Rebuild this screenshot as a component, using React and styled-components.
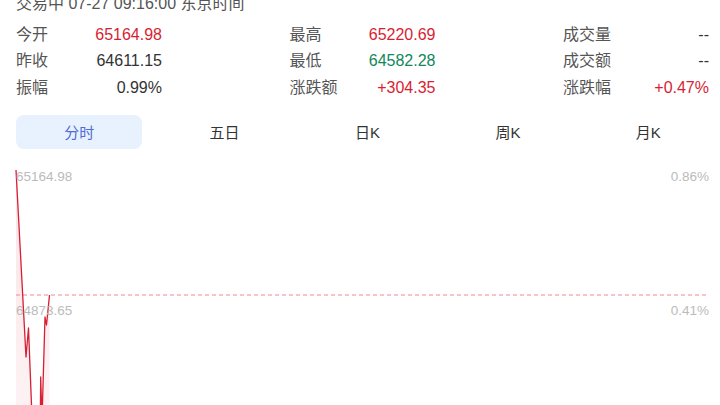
import React from "react";
import styled, { createGlobalStyle } from "styled-components";

const Global = createGlobalStyle`
  html, body { margin: 0; padding: 0; background: #fff; overflow: hidden; }
  body { font-family: "Liberation Sans", Arial, "Noto Sans CJK SC", sans-serif; }
`;

const RED = "#d81e33";
const GREEN = "#12875b";

const Page = styled.div`
  width: 720px;
  height: 405px;
  box-sizing: border-box;
  padding: 0 11px 0 16px;
  overflow: hidden;
`;

const Status = styled.div`
  margin-top: -9.5px;
  font-size: 16px;
  line-height: 26px;
  color: #555;
  white-space: nowrap;
`;

const Stats = styled.div`
  margin-top: 5.5px;
  display: grid;
  grid-template-columns: repeat(3, 146px);
  justify-content: space-between;
  font-size: 16px;
  line-height: 26.3px;
`;

const Cell = styled.div`
  display: flex;
  justify-content: space-between;
`;

const Label = styled.span`
  color: #555;
`;

const Value = styled.span`
  color: ${(p) => (p.$tone === "up" ? RED : p.$tone === "down" ? GREEN : "#333")};
`;

const Tabs = styled.div`
  margin-top: 14px;
  display: flex;
  gap: 19px;
`;

const Tab = styled.div`
  flex: 1 1 auto;
  height: 34px;
  display: flex;
  align-items: center;
  justify-content: center;
  border-radius: 8px;
  font-size: 15px;
  background: ${(p) => (p.$active ? "#e7f2fe" : "transparent")};
  color: ${(p) => (p.$active ? "#4f6bd5" : "#333")};
`;

const Chart = styled.div`
  position: relative;
  margin-top: 11px;
  height: 270px;
`;

const ChartSvg = styled.svg`
  position: absolute;
  inset: 0;
  overflow: visible;
`;

const AxisLabel = styled.span`
  position: absolute;
  top: ${(p) => p.$top}px;
  ${(p) => (p.$right ? "right: 0;" : "left: 0;")}
  font-size: 13.5px;
  line-height: 16px;
  color: #bbb;
`;

const stats = [
  ["今开", "65164.98", "up"],
  ["最高", "65220.69", "up"],
  ["成交量", "--"],
  ["昨收", "64611.15"],
  ["最低", "64582.28", "down"],
  ["成交额", "--"],
  ["振幅", "0.99%"],
  ["涨跌额", "+304.35", "up"],
  ["涨跌幅", "+0.47%", "up"],
];

const tabs = ["分时", "五日", "日K", "周K", "月K"];

const pts = [
  [0, 10], [10, 197], [12.5, 168], [15.5, 245], [17, 300], [24, 290],
  [24.7, 217], [26, 260], [29, 157], [30.5, 165], [33.5, 135],
];

export default function App() {
  const line = pts.map((p) => p.join(",")).join(" ");
  const area = `0,300 ${line} 33.5,300`;
  return (
    <Page>
      <Global />
      <Status>交易中 07-27 09:16:00 东京时间</Status>
      <Stats>
        {stats.map(([l, v, t]) => (
          <Cell key={l}>
            <Label>{l}</Label>
            <Value $tone={t}>{v}</Value>
          </Cell>
        ))}
      </Stats>
      <Tabs>
        {tabs.map((t, i) => (
          <Tab key={t} $active={i === 0}>{t}</Tab>
        ))}
      </Tabs>
      <Chart>
        <ChartSvg width="693" height="270">
          <defs>
            <linearGradient id="fillG" x1="0" y1="0" x2="0" y2="1">
              <stop offset="0" stopColor={RED} stopOpacity="0.12" />
              <stop offset="1" stopColor={RED} stopOpacity="0.04" />
            </linearGradient>
          </defs>
          <polygon points={area} fill="url(#fillG)" />
          <line x1="0" y1="135" x2="693" y2="135" stroke="#f08696" strokeWidth="1" strokeDasharray="4 3" />
          <polyline points={line} fill="none" stroke={RED} strokeWidth="1.3" strokeLinejoin="round" />
        </ChartSvg>
        <AxisLabel $top={9}>65164.98</AxisLabel>
        <AxisLabel $top={9} $right>0.86%</AxisLabel>
        <AxisLabel $top={143}>64873.65</AxisLabel>
        <AxisLabel $top={143} $right>0.41%</AxisLabel>
      </Chart>
    </Page>
  );
}
